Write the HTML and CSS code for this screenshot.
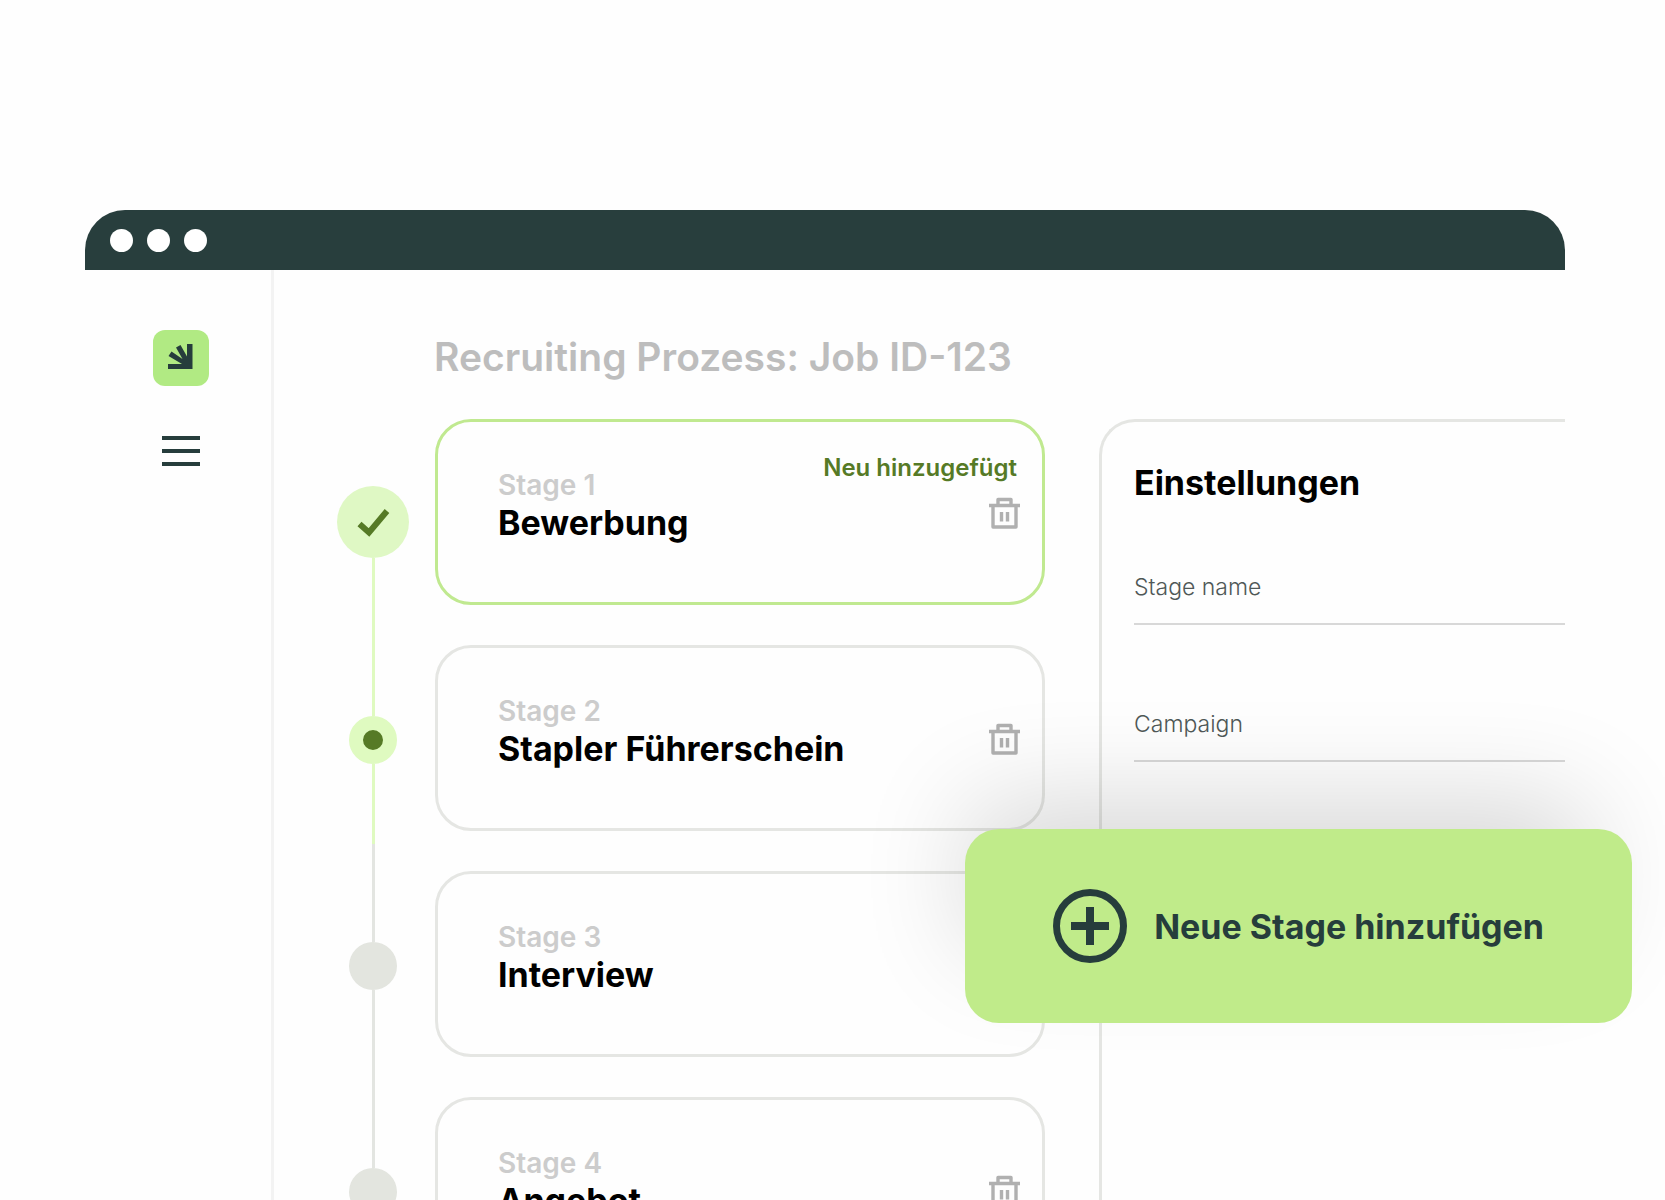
FILE: index.html
```html
<!DOCTYPE html>
<html lang="de">
<head>
    <meta charset="UTF-8">
    <meta name="viewport" content="width=device-width, initial-scale=1.0">
    <title>Recruiting Prozess</title>
    <link rel="stylesheet" href="styles.css">
</head>
<body>
    <!-- Trash icon, shared by all stage cards -->
    <svg class="sprite" aria-hidden="true">
        <symbol id="trash" viewBox="0 0 32 32">
            <path d="M5 9v21h23V9M1 8.500h31M10 8V2.500h13V8" fill="none" stroke="currentColor" stroke-width="3.400" stroke-linejoin="round"/>
            <path d="M13.500 15v9.500M19.500 15v9.500" fill="none" stroke="currentColor" stroke-width="3.400"/>
        </symbol>
    </svg>

    <div class="window">
        <div class="titlebar">
            <span class="light"></span>
            <span class="light"></span>
            <span class="light"></span>
        </div>

        <div class="app">
            <nav class="sidebar">
                <a class="logo" href="#" aria-label="Startseite">
                    <svg viewBox="0 0 56 56" aria-hidden="true">
                        <path d="M15 34h14L15.500 26l3-4.500 11 7.500-6.500-11.500 4.500-2.500 6.500 11.500V14h5.500v25H15z" fill="#263d3c"/>
                    </svg>
                </a>
                <button class="menu" type="button" aria-label="Menü">
                    <span></span>
                    <span></span>
                    <span></span>
                </button>
            </nav>

            <main class="content">
                <h1>Recruiting Prozess: Job ID-123</h1>

                <div class="board">
                    <div class="timeline">
                        <span class="dot done">
                            <svg viewBox="0 0 72 72" aria-hidden="true">
                                <path d="M22.500 38l9.500 8.500L50 25" fill="none" stroke="#567a26" stroke-width="6"/>
                            </svg>
                        </span>
                        <span class="line line-active"></span>
                        <span class="dot current"></span>
                        <span class="line line-half"></span>
                        <span class="dot"></span>
                        <span class="line"></span>
                        <span class="dot"></span>
                    </div>

                    <div class="stages">
                        <section class="stage new">
                            <div>
                                <p>Stage 1</p>
                                <h2>Bewerbung</h2>
                            </div>
                            <span class="tag">Neu hinzugefügt</span>
                            <button class="delete" type="button" aria-label="Bewerbung löschen"><svg><use href="#trash"/></svg></button>
                        </section>
                        <section class="stage">
                            <div>
                                <p>Stage 2</p>
                                <h2>Stapler Führerschein</h2>
                            </div>
                            <button class="delete" type="button" aria-label="Stapler Führerschein löschen"><svg><use href="#trash"/></svg></button>
                        </section>
                        <section class="stage">
                            <div>
                                <p>Stage 3</p>
                                <h2>Interview</h2>
                            </div>
                            <button class="delete" type="button" aria-label="Interview löschen"><svg><use href="#trash"/></svg></button>
                        </section>
                        <section class="stage">
                            <div>
                                <p>Stage 4</p>
                                <h2>Angebot</h2>
                            </div>
                            <button class="delete" type="button" aria-label="Angebot löschen"><svg><use href="#trash"/></svg></button>
                        </section>
                    </div>

                    <form class="settings">
                        <h2>Einstellungen</h2>
                        <input type="text" placeholder="Stage name" aria-label="Stage name">
                        <input type="text" placeholder="Campaign" aria-label="Campaign">
                    </form>
                </div>
            </main>
        </div>

        <button class="add-stage" type="button">
            <svg viewBox="0 0 74 74" aria-hidden="true">
                <circle cx="37" cy="37" r="33.500" fill="none" stroke="currentColor" stroke-width="7"/>
                <path d="M37 18v38M18 37h38" stroke="currentColor" stroke-width="8"/>
            </svg>
            Neue Stage hinzufügen
        </button>
    </div>
</body>
</html>
```
FILE: styles.css
```css
* {
    box-sizing: border-box;
}
body {
    margin: 0;
    height: 100vh;
    overflow: hidden;
    background: #fefefe;
    color: #000;
    font-family: Inter, "Liberation Sans", sans-serif;
}
h1, h2, p {
    margin: 0;
}
button {
    border: none;
    padding: 0;
    background: none;
    font-family: inherit;
    cursor: pointer;
}
.sprite {
    display: none;
}
.window {
    position: relative;
    height: 100%;
    padding-top: 210px;
    margin: 0 100px 0 85px;
    display: flex;
    flex-direction: column;
}
.titlebar {
    display: flex;
    flex-shrink: 0;
    align-items: center;
    gap: 14px;
    height: 60px;
    padding: 0 25px;
    background: #283e3d;
    border-radius: 40px 40px 0 0;
}
.light {
    width: 23px;
    height: 23px;
    border-radius: 50%;
    background: #fff;
}
.app {
    display: flex;
    flex: 1;
    min-height: 0;
}
.sidebar {
    display: flex;
    flex-direction: column;
    flex-shrink: 0;
    align-items: center;
    gap: 50px;
    width: 189px;
    padding-top: 60px;
    padding-left: 6px;
    border-right: 3px solid #f3f3f3;
}
.logo {
    width: 56px;
    height: 56px;
    border-radius: 12px;
    background: #b1ea83;
}
.logo svg {
    display: block;
}
.menu {
    display: flex;
    flex-direction: column;
    gap: 9px;
    width: 38px;
}
.menu span {
    height: 4px;
    background: #263d3c;
}
.content {
    flex: 1;
    min-width: 0;
    padding: 63px 0 0 63px;
}
h1 {
    padding-left: 97px;
    margin-bottom: 38px;
    font-size: 39px;
    font-weight: 600;
    line-height: 48px;
    color: #bdbdbd;
}
.board {
    display: grid;
    grid-template-columns: 72px minmax(0, 636fr) 54px minmax(0, 466fr);
}
.timeline {
    display: flex;
    flex-direction: column;
    align-items: center;
    padding-top: 67px;
}
.dot {
    flex-shrink: 0;
    width: 48px;
    height: 48px;
    border-radius: 50%;
    background: #e3e5df;
}
.dot.done {
    width: 72px;
    height: 72px;
    background: #dff8c4;
}
.dot.current {
    border: 14px solid #dffac0;
    background: #567a26;
}
.line {
    flex-shrink: 0;
    width: 3px;
    height: 178px;
    background: #e3e5e1;
}
.line-active {
    height: 158px;
    background: #dffac0;
}
.line-half {
    background: linear-gradient(#dffac0 45%, #e3e5e1 45%);
}
.stages {
    display: flex;
    flex-direction: column;
    gap: 40px;
    margin-left: 26px;
}
.stage {
    position: relative;
    display: flex;
    align-items: center;
    justify-content: space-between;
    padding: 46px 22px 58px 60px;
    border: 3px solid #e5e6e3;
    border-radius: 36px;
}
.stage.new {
    border-color: #c0e990;
}
.stage p {
    font-size: 28px;
    font-weight: 600;
    line-height: 34px;
    color: #ccc;
}
.stage h2, .settings h2 {
    font-size: 34px;
    font-weight: 700;
    line-height: 42px;
}
.tag {
    position: absolute;
    top: 30px;
    right: 25px;
    font-size: 24px;
    font-weight: 600;
    line-height: 32px;
    color: #567a26;
}
.delete {
    width: 32px;
    height: 32px;
    margin-top: 14px;
    color: #b0b0b0;
}
.delete svg {
    display: block;
    width: 32px;
    height: 32px;
}
.settings {
    grid-column: 4;
    padding: 40px 0 0 32px;
    border: solid #e5e6e3;
    border-width: 3px 0 0 3px;
    border-radius: 36px 0 0 0;
}
.settings input {
    display: block;
    width: 100%;
    height: 64px;
    margin-bottom: 73px;
    padding: 0 0 10px;
    border: none;
    border-bottom: 2px solid #d8d8d8;
    background: none;
    font-family: inherit;
    font-size: 23px;
    font-weight: 300;
}
.settings h2 {
    margin-bottom: 57px;
}
.settings input::placeholder {
    color: #4f5857;
    opacity: 1;
}
.add-stage {
    position: absolute;
    top: 829px;
    right: -67px;
    display: flex;
    align-items: center;
    gap: 27px;
    padding: 60px 88px;
    border-radius: 34px;
    background: #c0eb8a;
    box-shadow: -20px -50px 110px -25px rgba(0, 0, 0, 0.16);
    color: #263d3c;
    font-size: 34px;
    font-weight: 700;
    white-space: nowrap;
}
.add-stage svg {
    width: 74px;
    height: 74px;
}
```
